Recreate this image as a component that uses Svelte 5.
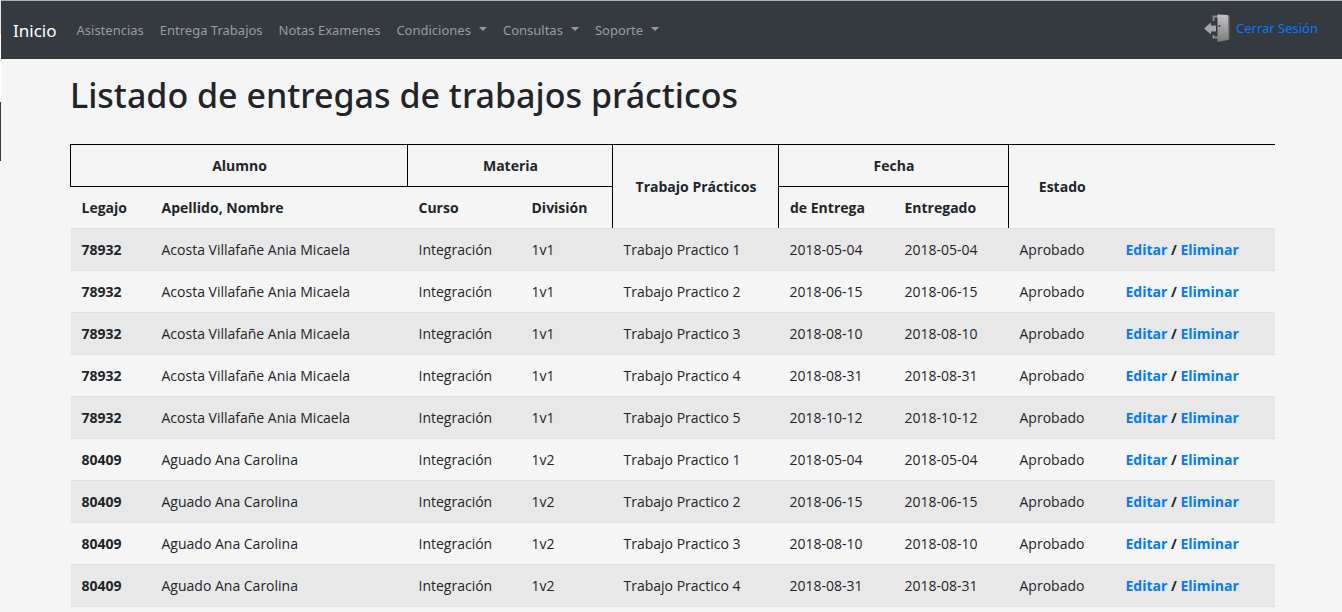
<script>
  const links = ['Asistencias', 'Entrega Trabajos', 'Notas Examenes'];
  const menus = ['Condiciones', 'Consultas', 'Soporte'];
  const dates = ['2018-05-04', '2018-06-15', '2018-08-10', '2018-08-31', '2018-10-12'];

  const students = [
    { id: '78932', name: 'Acosta Villafañe Ania Micaela', division: '1v1', count: 5 },
    { id: '80409', name: 'Aguado Ana Carolina', division: '1v2', count: 4 }
  ];

  const rows = students.flatMap((s) =>
    dates.slice(0, s.count).map((date, i) => ({ ...s, work: `Trabajo Practico ${i + 1}`, date }))
  );
</script>

<div class="page">
  <header>
    <nav>
      <a class="brand" href="#inicio">Inicio</a>
      <ul>
        {#each links as label}
          <li><a href="#seccion">{label}</a></li>
        {/each}
        {#each menus as label}
          <li><button type="button" aria-haspopup="true">{label}</button></li>
        {/each}
      </ul>
      <a class="logout" href="#salir">
        <svg width="26" height="30" viewBox="0 0 26 30" aria-hidden="true">
          <defs>
            <linearGradient id="door" x1="0" y1="0" x2="0" y2="1">
              <stop offset="0" stop-color="#c4c4c4" />
              <stop offset="1" stop-color="#7c7c7c" />
            </linearGradient>
          </defs>
          <path d="M9.500 8V3.500H14M9.500 22v2.500H14" fill="none" stroke="#858789" stroke-width="2" />
          <path d="M24 2l1.500 1v23l-1.500 1z" fill="#777" />
          <path d="M13.500 1.500L24 2v25l-10.500 2z" fill="url(#door)" />
          <path d="M0 15.500L7 9.500v3h5v6H7v3z" fill="#a6a6a6" />
          <circle cx="15.500" cy="13" r="1" fill="#333" />
        </svg>
        <span>Cerrar Sesión</span>
      </a>
    </nav>
  </header>

  <main>
    <h1>Listado de entregas de trabajos prácticos</h1>
    <table>
      <colgroup>
        <col class="c-id" /><col class="c-name" /><col class="c-course" /><col class="c-div" />
        <col class="c-work" /><col class="c-date" /><col class="c-date" /><col class="c-state" /><col class="c-actions" />
      </colgroup>
      <thead>
        <tr>
          <th class="group" colspan="2">Alumno</th>
          <th class="group" colspan="2">Materia</th>
          <th class="tall" rowspan="2">Trabajo Prácticos</th>
          <th class="group" colspan="2">Fecha</th>
          <th class="tall open" rowspan="2">Estado</th>
          <td class="tall open" rowspan="2"></td>
        </tr>
        <tr>
          <th>Legajo</th>
          <th>Apellido, Nombre</th>
          <th>Curso</th>
          <th>División</th>
          <th>de Entrega</th>
          <th>Entregado</th>
        </tr>
      </thead>
      <tbody>
        {#each rows as row}
          <tr>
            <th scope="row">{row.id}</th>
            <td>{row.name}</td>
            <td>Integración</td>
            <td>{row.division}</td>
            <td>{row.work}</td>
            <td>{row.date}</td>
            <td>{row.date}</td>
            <td>Aprobado</td>
            <td class="actions"><a href="#editar">Editar</a> / <a href="#eliminar">Eliminar</a></td>
          </tr>
        {/each}
      </tbody>
    </table>
  </main>
</div>

<style>
  :global(body) {
    margin: 0;
    background: #f5f5f5;
  }
  .page {
    box-sizing: border-box;
    padding-left: 1px;
    background: linear-gradient(#e4e5e6 34px, #fff 34px 102px, #343a40 102px 161px, transparent 161px) 0 0 / 1px 100% no-repeat;
    color: #212529;
    font-family: 'Segoe UI', 'Open Sans', 'Noto Sans', sans-serif;
    font-size: 14px;
    line-height: 21px;
  }
  a {
    color: #007bff;
    text-decoration: none;
  }
  header,
  h1 {
    font-family: 'Segoe UI', 'Noto Sans', sans-serif;
  }
  header {
    border-top: 1px solid #adb0b3;
    background: #343a40;
    font-size: 13px;
  }
  nav {
    display: flex;
    align-items: center;
    height: 58px;
    padding: 0 24px 0 12px;
  }
  .brand {
    margin-right: 12px;
    color: #fff;
    font-size: 17px;
  }
  ul {
    display: flex;
    margin: 0;
    padding: 0;
    list-style: none;
  }
  li a,
  li button {
    display: block;
    padding: 0 8px;
    border: 0;
    background: none;
    color: #999c9f;
    font: inherit;
  }
  li button::after {
    content: '';
    display: inline-block;
    margin-left: 8px;
    border: 4px solid transparent;
    border-top-color: currentColor;
    border-bottom: 0;
    vertical-align: 4px;
  }
  .logout {
    display: flex;
    align-items: center;
    gap: 6px;
    margin-left: auto;
    padding-bottom: 4px;
  }
  main {
    padding: 15px 67px 0 69px;
  }
  h1 {
    margin: 0 0 27px;
    font-size: 34px;
    font-weight: 500;
    line-height: 43px;
  }
  table {
    width: 100%;
    table-layout: fixed;
    border-collapse: collapse;
  }
  .c-id { width: 80px; }
  .c-name { width: 257px; }
  .c-course { width: 113px; }
  .c-div { width: 92px; }
  .c-work { width: 166px; }
  .c-date { width: 115px; }
  .c-state { width: 106px; }
  .c-actions { width: auto; }
  th,
  td {
    padding: 10px 10px 10px 11px;
    border-bottom: 1px solid #dee0e6;
    text-align: left;
    white-space: nowrap;
  }
  .group,
  .tall {
    border: 1px solid #000;
    text-align: center;
  }
  .tall {
    border-bottom-color: #dee0e6;
  }
  .open {
    border-right: 0;
  }
  td.open {
    border-left: 0;
  }
  tbody tr:nth-child(odd) {
    background: #e8e8e8;
  }
  .actions {
    font-weight: 700;
  }
</style>
